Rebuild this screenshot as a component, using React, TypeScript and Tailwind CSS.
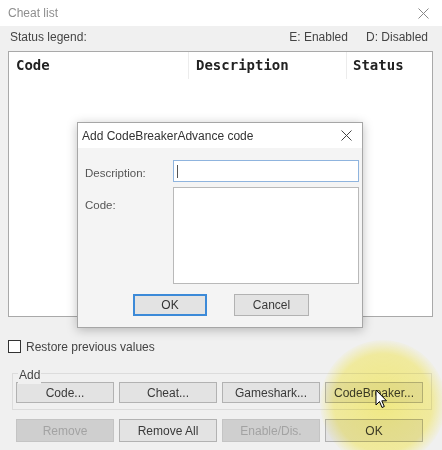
import React from 'react';

const ui = { fontFamily: '"Liberation Sans", Arial, sans-serif' };
const mono = { fontFamily: '"DejaVu Sans Mono", "Liberation Mono", monospace' };

interface BtnProps {
  label: string;
  width: string;
  disabled?: boolean;
  focused?: boolean;
  height?: string;
}

const WinButton: React.FC<BtnProps> = ({ label, width, disabled, focused, height = 'h-[21px]' }) => (
  <div
    className={`${width} ${height} flex items-center justify-center text-[12px] border ${
      disabled
        ? 'bg-[#cfcfcf] border-[#c4c4c4] text-[#a3a3a3]'
        : focused
        ? 'bg-[#e3e3e3] border-[#3c8ad8] border-2 text-[#333]'
        : 'bg-[#e3e3e3] border-[#b2b2b2] text-[#3a3a3a]'
    }`}
  >
    {label}
  </div>
);

const CloseX: React.FC<{ color: string }> = ({ color }) => (
  <svg width="11" height="11" viewBox="0 0 11 11">
    <path d="M0.5 0.5 L10.5 10.5 M10.5 0.5 L0.5 10.5" stroke={color} strokeWidth="1" />
  </svg>
);

const AddCodeDialog: React.FC = () => (
  <div className="absolute left-[77px] top-[122px] w-[286px] h-[206px] bg-[#f4f4f4] border border-[#a6a6a6] shadow-[0_2px_10px_rgba(0,0,0,0.25)] flex flex-col">
    <div className="h-[25px] bg-white flex items-center justify-between pl-[4px] pr-[10px]">
      <span className="text-[12px] text-[#333]">Add CodeBreakerAdvance code</span>
      <CloseX color="#444" />
    </div>
    <div className="flex mt-[12px]">
      <div className="w-[95px] pl-[7px] flex flex-col">
        <span className="text-[11.5px] text-[#555] mt-[5px]">Description:</span>
        <span className="text-[11.5px] text-[#555] mt-[15px]">Code:</span>
      </div>
      <div className="flex flex-col gap-[5px]">
        <div className="w-[186px] h-[22px] bg-white border border-[#8fb4de] flex items-center pl-[3px]">
          <div className="w-px h-[13px] bg-[#555]" />
        </div>
        <div className="w-[186px] h-[97px] bg-white border border-[#b9b9b9]" />
      </div>
    </div>
    <div className="flex mt-[10px] pl-[55px] gap-[27px]">
      <WinButton label="OK" width="w-[74px]" height="h-[22px]" focused />
      <WinButton label="Cancel" width="w-[75px]" height="h-[22px]" />
    </div>
  </div>
);

const Cursor: React.FC = () => (
  <svg className="absolute left-[375px] top-[389px]" width="14" height="21" viewBox="0 0 14 21">
    <path
      d="M1 1 L1 16 L4.5 12.5 L7 18.5 L9.3 17.5 L6.8 11.8 L11.5 11.8 Z"
      fill="#fff"
      stroke="#000"
      strokeWidth="1"
      strokeLinejoin="round"
    />
  </svg>
);

export default function App() {
  return (
    <div className="relative w-[442px] h-[450px] overflow-hidden bg-[#f0f0f0]" style={ui}>
      <div className="h-[26px] bg-white flex items-center justify-between pl-[8px] pr-[13px]">
        <span className="text-[12px] text-[#8e8e8e]">Cheat list</span>
        <CloseX color="#888" />
      </div>

      <div className="flex flex-col px-[8px]">
        <div className="h-[14px] mt-[4px] flex items-center text-[12px] text-[#444]">
          <span className="pl-[2px]">Status legend:</span>
          <span className="ml-auto">E: Enabled</span>
          <span className="ml-[18px] mr-[6px]">D: Disabled</span>
        </div>

        <div className="mt-[7px] w-[425px] h-[266px] bg-white border border-[#a9a9a9]">
          <div className="h-[27px] flex items-center text-[14px] font-bold text-[#222]" style={mono}>
            <div className="w-[180px] h-full flex items-center pl-[7px] border-r border-[#ececec]">Code</div>
            <div className="w-[158px] h-full flex items-center pl-[7px] border-r border-[#ececec]">Description</div>
            <div className="flex-1 h-full flex items-center pl-[6px]">Status</div>
          </div>
        </div>

        <div className="mt-[23px] h-[13px] flex items-center gap-[5px]">
          <div className="w-[13px] h-[13px] bg-white border border-[#333]" />
          <span className="text-[12px] text-[#444]">Restore previous values</span>
        </div>

        <div className="relative mt-[20px] ml-[4px] w-[420px] h-[37px] border border-[#dcdcdc] pl-[3px] pt-[8px]">
          <span className="absolute left-[5px] top-[-8px] bg-[#f0f0f0] px-[1px] text-[12px] text-[#444]">Add</span>
          <div className="flex gap-[5px]">
            <WinButton label="Code..." width="w-[98px]" />
            <WinButton label="Cheat..." width="w-[98px]" />
            <WinButton label="Gameshark..." width="w-[98px]" />
            <WinButton label="CodeBreaker..." width="w-[98px]" />
          </div>
        </div>

        <div className="mt-[9px] ml-[8px] flex gap-[5px]">
          <WinButton label="Remove" width="w-[98px]" height="h-[23px]" disabled />
          <WinButton label="Remove All" width="w-[98px]" height="h-[23px]" />
          <WinButton label="Enable/Dis." width="w-[98px]" height="h-[23px]" disabled />
          <WinButton label="OK" width="w-[98px]" height="h-[23px]" />
        </div>
      </div>

      <AddCodeDialog />

      <div className="pointer-events-none absolute left-[320px] top-[340px] w-[126px] h-[126px] rounded-full mix-blend-multiply bg-[radial-gradient(circle,rgba(255,246,120,0.85)_0%,rgba(255,246,130,0.7)_55%,rgba(255,246,130,0)_72%)]" />
      <Cursor />
    </div>
  );
}
